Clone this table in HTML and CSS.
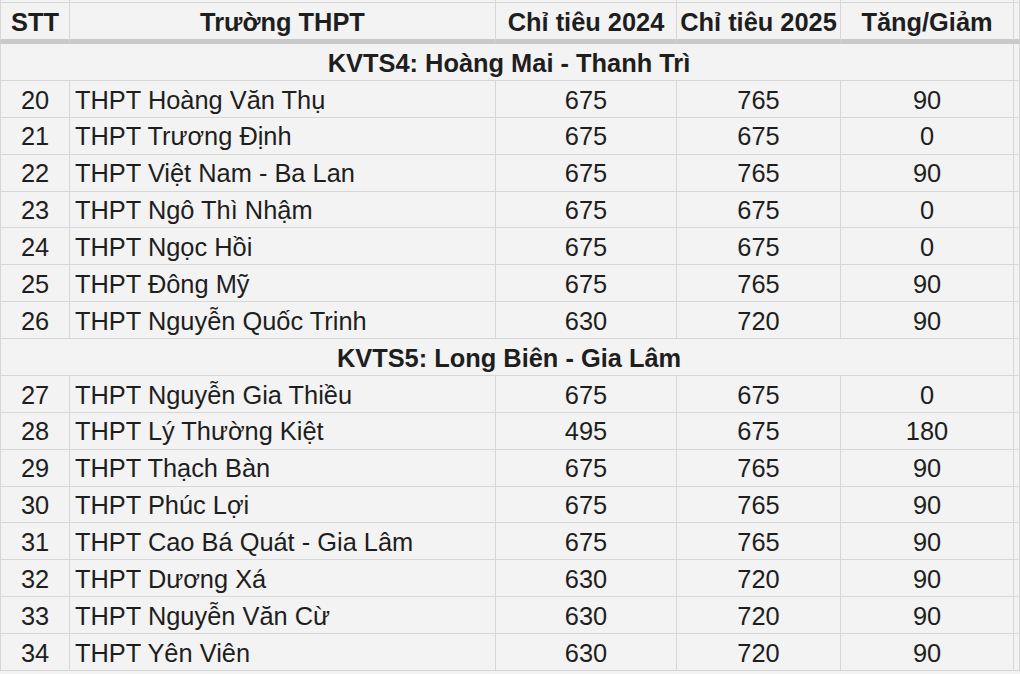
FILE: index.html
```html
<!DOCTYPE html>
<html lang="vi">
<head>
<meta charset="utf-8">
<title>Chỉ tiêu tuyển sinh THPT</title>
<link rel="stylesheet" href="styles.css">
</head>
<body>
<div class="sheet">
  <div class="c first sliver"></div><div class="c sliver"></div><div class="c sliver"></div><div class="c sliver"></div><div class="c sliver"></div><div class="c sliver"></div>

  <div class="c first head">STT</div>
  <div class="c head">Trường THPT</div>
  <div class="c head">Chỉ tiêu 2024</div>
  <div class="c head">Chỉ tiêu 2025</div>
  <div class="c head">Tăng/Giảm</div>
  <div class="c head"></div>

  <div class="c first section">KVTS4: Hoàng Mai - Thanh Trì</div><div class="c"></div>

  <div class="c first num">20</div><div class="c name">THPT Hoàng Văn Thụ</div><div class="c num">675</div><div class="c num">765</div><div class="c num">90</div><div class="c"></div>
  <div class="c first num">21</div><div class="c name">THPT Trương Định</div><div class="c num">675</div><div class="c num">675</div><div class="c num">0</div><div class="c"></div>
  <div class="c first num">22</div><div class="c name">THPT Việt Nam - Ba Lan</div><div class="c num">675</div><div class="c num">765</div><div class="c num">90</div><div class="c"></div>
  <div class="c first num">23</div><div class="c name">THPT Ngô Thì Nhậm</div><div class="c num">675</div><div class="c num">675</div><div class="c num">0</div><div class="c"></div>
  <div class="c first num">24</div><div class="c name">THPT Ngọc Hồi</div><div class="c num">675</div><div class="c num">675</div><div class="c num">0</div><div class="c"></div>
  <div class="c first num">25</div><div class="c name">THPT Đông Mỹ</div><div class="c num">675</div><div class="c num">765</div><div class="c num">90</div><div class="c"></div>
  <div class="c first num">26</div><div class="c name">THPT Nguyễn Quốc Trinh</div><div class="c num">630</div><div class="c num">720</div><div class="c num">90</div><div class="c"></div>

  <div class="c first section">KVTS5: Long Biên - Gia Lâm</div><div class="c"></div>

  <div class="c first num">27</div><div class="c name">THPT Nguyễn Gia Thiều</div><div class="c num">675</div><div class="c num">675</div><div class="c num">0</div><div class="c"></div>
  <div class="c first num">28</div><div class="c name">THPT Lý Thường Kiệt</div><div class="c num">495</div><div class="c num">675</div><div class="c num">180</div><div class="c"></div>
  <div class="c first num">29</div><div class="c name">THPT Thạch Bàn</div><div class="c num">675</div><div class="c num">765</div><div class="c num">90</div><div class="c"></div>
  <div class="c first num">30</div><div class="c name">THPT Phúc Lợi</div><div class="c num">675</div><div class="c num">765</div><div class="c num">90</div><div class="c"></div>
  <div class="c first num">31</div><div class="c name">THPT Cao Bá Quát - Gia Lâm</div><div class="c num">675</div><div class="c num">765</div><div class="c num">90</div><div class="c"></div>
  <div class="c first num">32</div><div class="c name">THPT Dương Xá</div><div class="c num">630</div><div class="c num">720</div><div class="c num">90</div><div class="c"></div>
  <div class="c first num">33</div><div class="c name">THPT Nguyễn Văn Cừ</div><div class="c num">630</div><div class="c num">720</div><div class="c num">90</div><div class="c"></div>
  <div class="c first num">34</div><div class="c name">THPT Yên Viên</div><div class="c num">630</div><div class="c num">720</div><div class="c num">90</div><div class="c"></div>
</div>
</body>
</html>
```

FILE: styles.css
```css
html, body {
  margin: 0;
  padding: 0;
  background: #f3f3f3;
  overflow: hidden;
}

.sheet {
  display: grid;
  width: 1020px;
  grid-template-columns: 70px 426px 181px 164px 173px 1fr;
  grid-template-rows: 3px 41px repeat(17, 36.875px);
  font-family: "Liberation Sans", Arial, Helvetica, sans-serif;
  font-size: 25.4px;
  color: #1e1e1e;
  background: #f3f3f3;
}

.c {
  box-sizing: border-box;
  border-right: 1px solid #d7d7d7;
  border-bottom: 1px solid #d7d7d7;
  display: flex;
  align-items: center;
  justify-content: center;
  white-space: nowrap;
  overflow: hidden;
  line-height: 1;
  padding-top: 3px;
}

.c.sliver {
  padding-top: 0;
}

.c.first {
  border-left: 1px solid #d7d7d7;
}

.head {
  font-weight: bold;
  border-bottom: 5px solid #c9c9c9;
  padding-top: 3px;
}

.section {
  grid-column: 1 / 6;
  font-weight: bold;
  padding-left: 4px;
}

.name {
  justify-content: flex-start;
  padding-left: 5px;
}
```
